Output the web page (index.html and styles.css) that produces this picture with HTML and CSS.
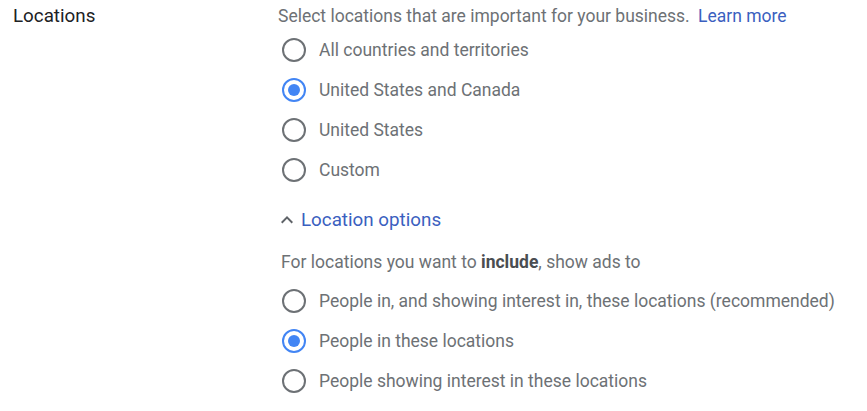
FILE: index.html
```html
<!DOCTYPE html>
<html lang="en">
<head>
    <meta charset="UTF-8">
    <meta name="viewport" content="width=device-width, initial-scale=1.0">
    <title>Locations</title>
    <link rel="stylesheet" href="styles.css">
</head>
<body>

<div class="setting">
    <div class="setting-label">Locations</div>

    <div class="setting-body">
        <div class="intro">
            Select locations that are important for your business.
            <a href="#" class="link">Learn more</a>
        </div>

        <label class="radio-row">
            <input type="radio" name="locations">
            <span class="radio"></span>
            <span class="radio-text">All countries and territories</span>
        </label>
        <label class="radio-row">
            <input type="radio" name="locations" checked>
            <span class="radio"></span>
            <span class="radio-text">United States and Canada</span>
        </label>
        <label class="radio-row">
            <input type="radio" name="locations">
            <span class="radio"></span>
            <span class="radio-text">United States</span>
        </label>
        <label class="radio-row">
            <input type="radio" name="locations">
            <span class="radio"></span>
            <span class="radio-text">Custom</span>
        </label>

        <div class="options-toggle">
            <svg class="chevron" viewBox="0 0 24 24" width="24" height="24">
                <path d="M12 8l-6 6 1.41 1.41L12 10.83l4.59 4.58L18 14z"/>
            </svg>
            <span class="toggle-text">Location options</span>
        </div>

        <div class="sub-heading">For locations you want to <b>include</b>, show ads to</div>

        <label class="radio-row">
            <input type="radio" name="target">
            <span class="radio"></span>
            <span class="radio-text">People in, and showing interest in, these locations (recommended)</span>
        </label>
        <label class="radio-row">
            <input type="radio" name="target" checked>
            <span class="radio"></span>
            <span class="radio-text">People in these locations</span>
        </label>
        <label class="radio-row">
            <input type="radio" name="target">
            <span class="radio"></span>
            <span class="radio-text">People showing interest in these locations</span>
        </label>
    </div>
</div>

</body>
</html>
```

FILE: styles.css
```css
body {
    font-family: Roboto, "Liberation Sans", Arial, sans-serif;
    background-color: #ffffff;
    color: #6d7175;
    margin: 0;
    padding: 0;
}

.setting {
    display: flex;
    padding-top: 3px;
}

.setting-label {
    width: 265px;
    padding-left: 13px;
    font-size: 18.8px;
    line-height: 26px;
    color: #202124;
    flex-shrink: 0;
}

.setting-body {
    display: flex;
    flex-direction: column;
    align-items: flex-start;
}

.intro {
    font-size: 17.5px;
    line-height: 27px;
}

.link {
    color: #3b5fc0;
    text-decoration: none;
    margin-left: 4px;
}

.radio-row {
    display: flex;
    align-items: center;
    height: 40px;
    font-size: 17.5px;
    cursor: pointer;
}

.radio-row input {
    display: none;
}

.radio {
    width: 20px;
    height: 20px;
    border: 2px solid #6d7175;
    border-radius: 50%;
    margin-left: 4px;
    margin-right: 13px;
    display: flex;
    align-items: center;
    justify-content: center;
}

.radio-row input:checked + .radio {
    border-color: #4285f4;
}

.radio-row input:checked + .radio::after {
    content: "";
    width: 12px;
    height: 12px;
    border-radius: 50%;
    background-color: #4285f4;
}

.options-toggle {
    display: flex;
    align-items: center;
    margin-top: 15px;
    height: 30px;
    cursor: pointer;
}

.chevron {
    fill: #5f6368;
    margin-left: -3px;
}

.toggle-text {
    color: #3b5fc0;
    font-size: 18.8px;
    margin-left: 2px;
}

.sub-heading {
    margin-top: 12px;
    margin-left: 3px;
    margin-bottom: 4px;
    font-size: 17.5px;
    line-height: 30px;
}

.sub-heading b {
    color: #4a4d51;
}
```
